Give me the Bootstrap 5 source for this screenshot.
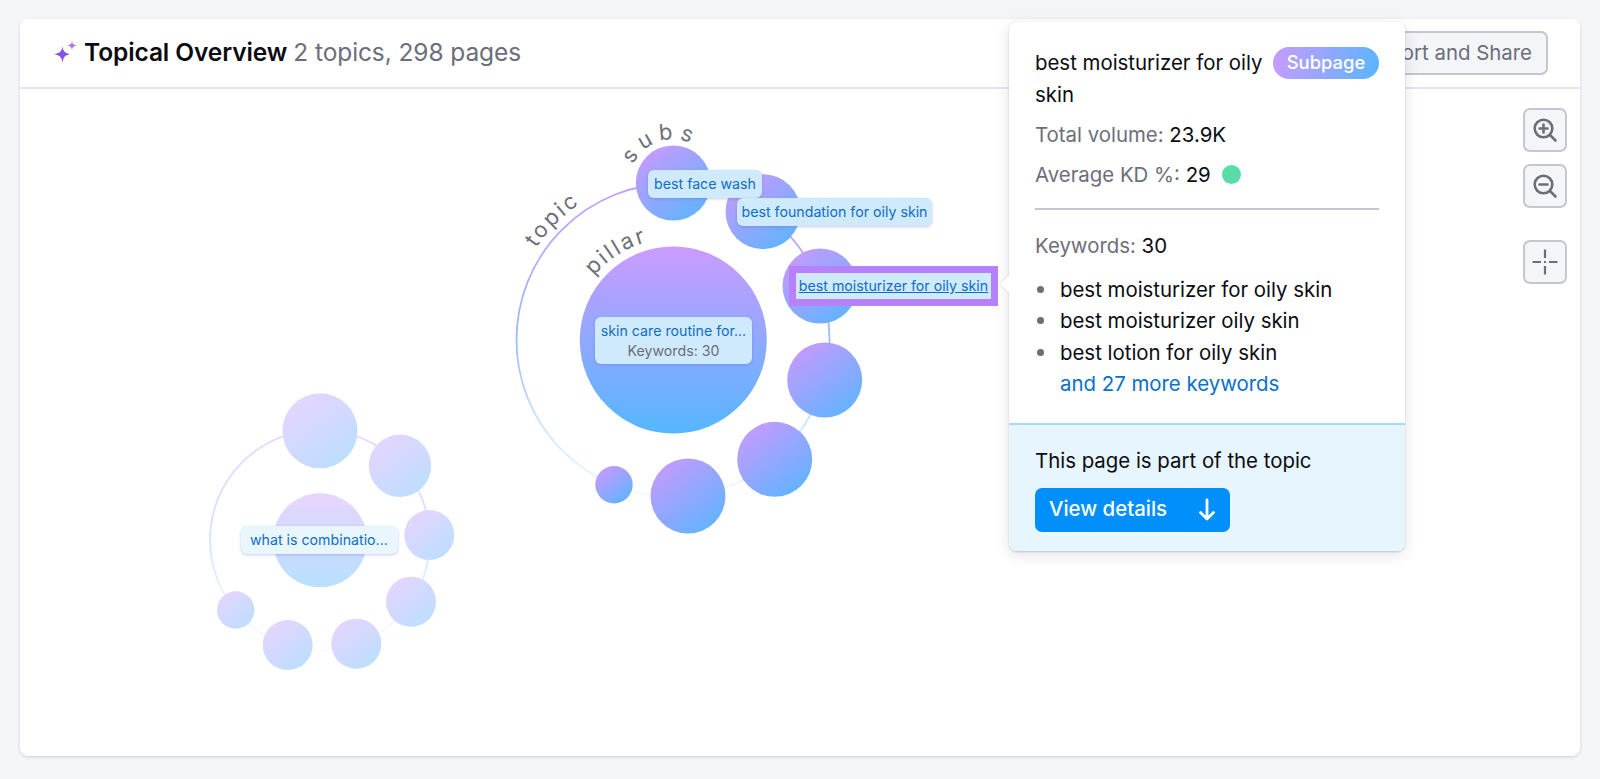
<!doctype html>
<html lang="en">
<head>
<meta charset="utf-8">
<title>Topical Overview</title>
<link href="https://cdn.jsdelivr.net/npm/bootstrap@5.3.0/dist/css/bootstrap.min.css" rel="stylesheet">
<style>
html,body{height:100%;}
body{background:#f4f5f9;font-family:Inter,"Liberation Sans",sans-serif;color:#191b23;overflow:hidden;padding:19px 20px 23px 20px;}
.map-card{height:737px;border:0;border-radius:8px;box-shadow:0 1px 3px rgba(25,27,60,.18);}
.map-head{height:70px;background:#fff;border-bottom:2px solid #e6e7ee;padding:0 32px 0 33px;border-radius:8px 8px 0 0!important;}
.map-title{font-size:24.5px;font-weight:600;color:#0b0c12;margin:0;letter-spacing:-.1px;}
.map-count{font-size:24.5px;font-weight:400;color:#6c6e79;}
.spark{width:25px;height:25px;margin-right:6px;}
.tool-btn{background:#f4f5f9;border:2px solid #c4c7cf;border-radius:7px;color:#6c6e79;}
.tool-btn:hover{background:#f4f5f9;border-color:#c4c7cf;color:#6c6e79;}
.share-btn{height:44px;font-size:20.4px;padding:0 14px;line-height:1;}
.map-canvas{position:relative;flex:1 1 auto;padding:0;}
.map-svg{position:absolute;left:0;top:0;width:1560px;height:648px;}
.curve-label{font-family:Inter,"Liberation Sans",sans-serif;font-size:22px;fill:#6c6e79;}
.chip{position:absolute;background:#cfe9fd;border-radius:6px;box-shadow:0 1px 3px rgba(70,90,170,.3);color:#0f6ec4;font-size:14.2px;line-height:28px;white-space:nowrap;text-align:center;}
.chip-wash{left:628px;top:81px;width:114px;height:28px;}
.chip-found{left:717px;top:109px;width:195px;height:28px;}
.chip-moist{left:776px;top:184px;width:195px;height:26px;line-height:25px;border-radius:0;outline:7px solid #b781fb;outline-offset:0;box-shadow:none;}
.chip-moist a{color:#0f6ec4;}
.chip-pillar{left:575px;top:228px;width:157px;height:47px;line-height:19.5px;padding-top:4px;}
.chip-pillar small{display:block;color:#6c6e79;font-size:14.2px;}
.chip-combo{left:221px;top:437px;width:157px;height:28px;background:#e9f6fe;text-align:left;padding-left:9px;}
.tools{position:absolute;right:13px;top:19px;gap:12px;}
.tool-sq{width:44px;height:44px;padding:0;}
.tool-gap{margin-top:20px;}
.pop{position:absolute;left:989px;top:3px;width:396px;height:529px;background:#fff;border:0;border-radius:8px;box-shadow:0 1px 2px rgba(25,27,60,.2),0 4px 16px rgba(25,27,60,.12);z-index:5;font-size:20.4px;line-height:31.5px;color:#0b0c12;}
.pop-arrow{position:absolute;left:-6px;top:255px;width:14px;height:14px;background:#fff;transform:rotate(45deg);box-shadow:-1px 1px 2px rgba(25,27,60,.08);}
.pop-main{padding:25px 26px 0 26px;height:401px;position:relative;}
.pop-name{width:232px;line-height:32px;margin:0;font-size:20.4px;font-weight:400;}
.pop-tag{height:32px;width:106px;font-size:18.4px;font-weight:500;line-height:31px;padding:0;border-radius:16px;background:linear-gradient(100deg,#c99bfd,#59b5ff);color:#fff;}
.muted-lbl{color:#6c6e79;}
.stat-row{margin:0;}
.kd-dot{display:inline-block;width:19px;height:19px;border-radius:50%;background:#59dda8;margin-left:5px;vertical-align:-3px;}
.pop-rule{border:0;border-top:2px solid #c4c7cf;opacity:1;margin:18px 0 20px;}
.kw-list{padding-left:25px;margin:12px 0 0;}
.kw-item{position:relative;}
.kw-item::before{content:"";position:absolute;left:-23px;top:12px;width:7px;height:7px;border-radius:50%;background:#6c6e79;}
.kw-more{color:#0a6fcf;text-decoration:none;}
.pop-foot{height:128px;background:#e6f5fe;border-top:2px solid #a5dafb;padding:20px 26px 0;border-radius:0 0 8px 8px;}
.pop-foot p{margin:0 0 11px;}
.view-btn{background:#008ffb;border:0;border-radius:7px;color:#fff;height:44px;width:195px;font-size:20.4px;font-weight:500;padding:0 14px;}
.view-btn:hover{background:#008ffb;color:#fff;}
</style>
</head>
<body>
<div class="card map-card">
  <div class="card-header map-head d-flex align-items-center justify-content-between">
    <h1 class="map-title d-flex align-items-center">
      <svg class="spark" viewBox="0 0 25 25" aria-hidden="true"><path fill="#8653e8" d="M9.5 6.5 C10.2 11 11.6 13 17 14.2 C11.6 15.4 10.2 17.5 9.5 23 C8.8 17.5 7.4 15.4 1 14.2 C7.4 13 8.8 11 9.5 6.5Z"/><path fill="#a877f2" d="M19 1 C19.4 3.8 20.2 4.8 24 5.6 C20.2 6.4 19.4 7.4 19 10.4 C18.6 7.4 17.8 6.4 14 5.6 C17.8 4.8 18.6 3.8 19 1Z"/></svg>
      <span>Topical Overview <span class="map-count">2 topics, 298 pages</span></span>
    </h1>
    <button class="btn tool-btn share-btn" type="button">Export and Share</button>
  </div>
  <div class="card-body map-canvas">
    <svg class="map-svg" viewBox="20 89 1560 648" aria-hidden="true">
      <defs>
        <linearGradient id="gPillar" x1="0" y1="0" x2="0" y2="1"><stop offset="0" stop-color="#cb9bff"/><stop offset="1" stop-color="#55b6ff"/></linearGradient>
        <linearGradient id="gSub" x1=".15" y1=".1" x2=".8" y2=".95"><stop offset="0" stop-color="#c39bfd"/><stop offset="1" stop-color="#62b3ff"/></linearGradient>
        <linearGradient id="gRing" gradientUnits="userSpaceOnUse" x1="0" y1="183" x2="0" y2="497"><stop offset="0" stop-color="#c99bff"/><stop offset=".5" stop-color="#9dbcff"/><stop offset=".8" stop-color="#cfe9ff"/><stop offset="1" stop-color="#f2f9ff"/></linearGradient>
        <linearGradient id="gRing2" gradientUnits="userSpaceOnUse" x1="0" y1="430" x2="0" y2="650"><stop offset="0" stop-color="#c99bff"/><stop offset=".5" stop-color="#9dbcff"/><stop offset=".8" stop-color="#cfe9ff"/><stop offset="1" stop-color="#f2f9ff"/></linearGradient>
        <path id="arcTopic" d="M536 248 A165 165 0 0 1 673 175"/>
        <path id="arcPillar" d="M594 276 A102 102 0 0 1 690 240"/>
        <path id="arcSubs" d="M633 165 A44 44 0 0 1 717 183"/>
      </defs>
      <g>
        <circle cx="673" cy="340" r="156.5" fill="none" stroke="url(#gRing)" stroke-width="1.8"/>
        <circle cx="673.3" cy="340" r="93.5" fill="url(#gPillar)"/>
        <circle cx="673.3" cy="183" r="37.5" fill="url(#gSub)"/>
        <circle cx="763" cy="211.7" r="37.5" fill="url(#gSub)"/>
        <circle cx="820" cy="286" r="37.5" fill="url(#gSub)"/>
        <circle cx="824.7" cy="380" r="37.5" fill="url(#gSub)"/>
        <circle cx="774.7" cy="459.3" r="37.5" fill="url(#gSub)"/>
        <circle cx="688" cy="496" r="37.5" fill="url(#gSub)"/>
        <circle cx="614" cy="484.7" r="18.7" fill="url(#gSub)"/>
      </g>
      <text class="curve-label" letter-spacing="2.5"><textPath href="#arcTopic">topic</textPath></text>
      <text class="curve-label" letter-spacing="2.5"><textPath href="#arcPillar">pillar</textPath></text>
      <text class="curve-label" letter-spacing="6"><textPath href="#arcSubs">subs</textPath></text>
      <g opacity=".42">
        <circle cx="320" cy="540" r="110" fill="none" stroke="url(#gRing2)" stroke-width="1.8"/>
        <circle cx="320" cy="540.3" r="47" fill="url(#gPillar)"/>
        <circle cx="320" cy="430.8" r="37.5" fill="url(#gSub)"/>
        <circle cx="400" cy="465.8" r="31.2" fill="url(#gSub)"/>
        <circle cx="429.3" cy="535" r="25" fill="url(#gSub)"/>
        <circle cx="411" cy="601.7" r="25" fill="url(#gSub)"/>
        <circle cx="356.3" cy="643.7" r="25" fill="url(#gSub)"/>
        <circle cx="287.7" cy="645" r="25" fill="url(#gSub)"/>
        <circle cx="235.7" cy="610" r="18.7" fill="url(#gSub)"/>
      </g>
    </svg>
    <div class="chip chip-wash">best face wash</div>
    <div class="chip chip-found">best foundation for oily skin</div>
    <div class="chip chip-moist"><a href="#">best moisturizer for oily skin</a></div>
    <div class="chip chip-pillar">skin care routine for...<small>Keywords: 30</small></div>
    <div class="chip chip-combo">what is combinatio...</div>
    <div class="tools d-flex flex-column">
      <button class="btn tool-btn tool-sq d-flex align-items-center justify-content-center" type="button" aria-label="Zoom in">
        <svg width="26" height="26" viewBox="0 0 26 26" fill="none" stroke="#6c6e79" stroke-width="2.6" stroke-linecap="round"><circle cx="11.5" cy="11.5" r="8.8"/><path d="M18 18l5.5 5.5M7.5 11.5h8M11.5 7.5v8"/></svg>
      </button>
      <button class="btn tool-btn tool-sq d-flex align-items-center justify-content-center" type="button" aria-label="Zoom out">
        <svg width="26" height="26" viewBox="0 0 26 26" fill="none" stroke="#6c6e79" stroke-width="2.6" stroke-linecap="round"><circle cx="11.5" cy="11.5" r="8.8"/><path d="M18 18l5.5 5.5M7.5 11.5h8"/></svg>
      </button>
      <button class="btn tool-btn tool-sq tool-gap d-flex align-items-center justify-content-center" type="button" aria-label="Center">
        <svg width="26" height="26" viewBox="0 0 26 26" fill="none" stroke="#6c6e79" stroke-width="2.2" stroke-linecap="butt"><path d="M13 0.5v8.5M13 17v8.5M0.5 13h8.5M17 13h8.5M12 13h2"/></svg>
      </button>
    </div>
  </div>
  <div class="pop">
    <span class="pop-arrow"></span>
    <div class="pop-main">
      <div class="d-flex justify-content-between align-items-start">
        <h2 class="pop-name">best moisturizer for oily skin</h2>
        <span class="badge pop-tag">Subpage</span>
      </div>
      <p class="stat-row mt-2"><span class="muted-lbl">Total volume:</span> 23.9K</p>
      <p class="stat-row mt-2 d-flex align-items-center"><span class="muted-lbl">Average KD %:&nbsp;</span>29&nbsp;<span class="kd-dot"></span></p>
      <hr class="pop-rule">
      <p class="stat-row"><span class="muted-lbl">Keywords:</span> 30</p>
      <ul class="list-unstyled kw-list">
        <li class="kw-item">best moisturizer for oily skin</li>
        <li class="kw-item">best moisturizer oily skin</li>
        <li class="kw-item">best lotion for oily skin</li>
        <li><a class="kw-more" href="#">and 27 more keywords</a></li>
      </ul>
    </div>
    <div class="pop-foot">
      <p>This page is part of the topic</p>
      <button class="btn view-btn d-flex align-items-center justify-content-between" type="button">View details
        <svg width="18" height="24" viewBox="0 0 18 24" fill="none" stroke="#fff" stroke-width="2.8" stroke-linecap="round" stroke-linejoin="round"><path d="M9 2v19M2.5 14.5 9 21l6.5-6.5"/></svg>
      </button>
    </div>
  </div>
</div>
<script src="https://cdn.jsdelivr.net/npm/bootstrap@5.3.0/dist/js/bootstrap.bundle.min.js"></script>
</body>
</html>
